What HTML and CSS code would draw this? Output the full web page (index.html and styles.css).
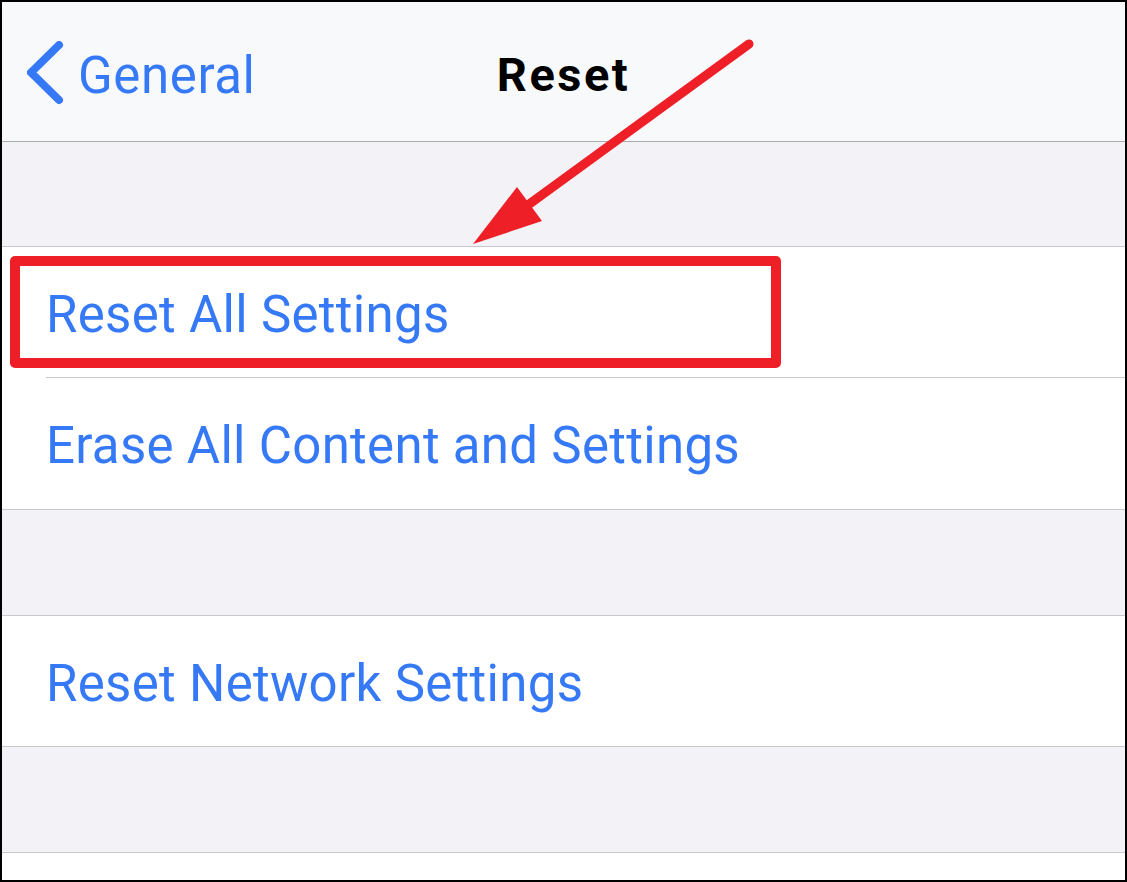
FILE: index.html
```html
<!DOCTYPE html>
<html lang="en">
<head>
    <meta charset="UTF-8">
    <meta name="viewport" content="width=device-width, initial-scale=1.0">
    <title>Reset</title>
    <link rel="stylesheet" href="styles.css">
</head>
<body>
    <div class="frame">
        <div class="nav-bar">
            <div class="back">
                <svg class="chevron" width="44" height="70" viewBox="0 0 44 70">
                    <polyline points="32,4 4,31.5 32,59" fill="none" stroke="#3579f6" stroke-width="8" stroke-linecap="round" stroke-linejoin="round"/>
                </svg>
                <span class="back-label">General</span>
            </div>
            <div class="nav-title">Reset</div>
        </div>

        <div class="spacer first"></div>
        <div class="group">
            <div class="cell">Reset All Settings</div>
            <div class="cell">Erase All Content and Settings</div>
        </div>

        <div class="spacer"></div>
        <div class="group">
            <div class="cell">Reset Network Settings</div>
        </div>

        <div class="spacer"></div>
        <div class="bottom"></div>

        <!-- annotation -->
        <div class="highlight"></div>
        <svg class="arrow" width="1127" height="882" viewBox="0 0 1127 882">
            <line x1="749" y1="44" x2="528" y2="205" stroke="#ee1f27" stroke-width="9" stroke-linecap="round"/>
            <polygon points="473,244 517,187 542,221" fill="#ee1f27"/>
        </svg>
    </div>
</body>
</html>
```

FILE: styles.css
```css
body {
    margin: 0;
    padding: 0;
    font-family: Roboto, "Liberation Sans", sans-serif;
}
.frame {
    position: relative;
    width: 1127px;
    height: 882px;
    box-sizing: border-box;
    border: 2px solid #000;
    background-color: #fff;
    overflow: hidden;
}
.nav-bar {
    position: relative;
    height: 139px;
    background-color: #f8f9fb;
    border-bottom: 1px solid #a9a9ae;
    display: flex;
    align-items: center;
}
.back {
    display: flex;
    align-items: center;
    margin-left: 25px;
    margin-top: 8px;
    color: #3579f6;
}
.chevron {
    display: block;
}
.back-label {
    margin-left: 7px;
    font-size: 51px;
    letter-spacing: 0.6px;
}
.nav-title {
    position: absolute;
    left: 0;
    right: 0;
    top: 45px;
    text-align: center;
    font-size: 47px;
    font-weight: 700;
    letter-spacing: 2.5px;
    color: #000;
}
.spacer {
    height: 105px;
    background-color: #f2f2f7;
    border-bottom: 1px solid #c8c7cc;
}
.spacer.first {
    height: 104px;
}
.group {
    background-color: #fff;
    border-bottom: 1px solid #c8c7cc;
}
.cell {
    box-sizing: border-box;
    height: 130px;
    padding: 4px 0 0 44px;
    display: flex;
    align-items: center;
    font-size: 51px;
    letter-spacing: 0.3px;
    color: #3579f6;
    position: relative;
}
.cell + .cell {
    height: 132px;
    border-top: 1px solid transparent;
}
.cell + .cell::before {
    content: "";
    position: absolute;
    left: 44px;
    right: 0;
    top: -1px;
    border-top: 1px solid #c8c7cc;
}
.bottom {
    height: 27px;
    background-color: #fff;
}
.highlight {
    position: absolute;
    left: 8px;
    top: 254px;
    width: 771px;
    height: 112px;
    box-sizing: border-box;
    border: 10px solid #ee1f27;
    border-radius: 5px;
}
.arrow {
    position: absolute;
    left: -2px;
    top: -2px;
}
```
